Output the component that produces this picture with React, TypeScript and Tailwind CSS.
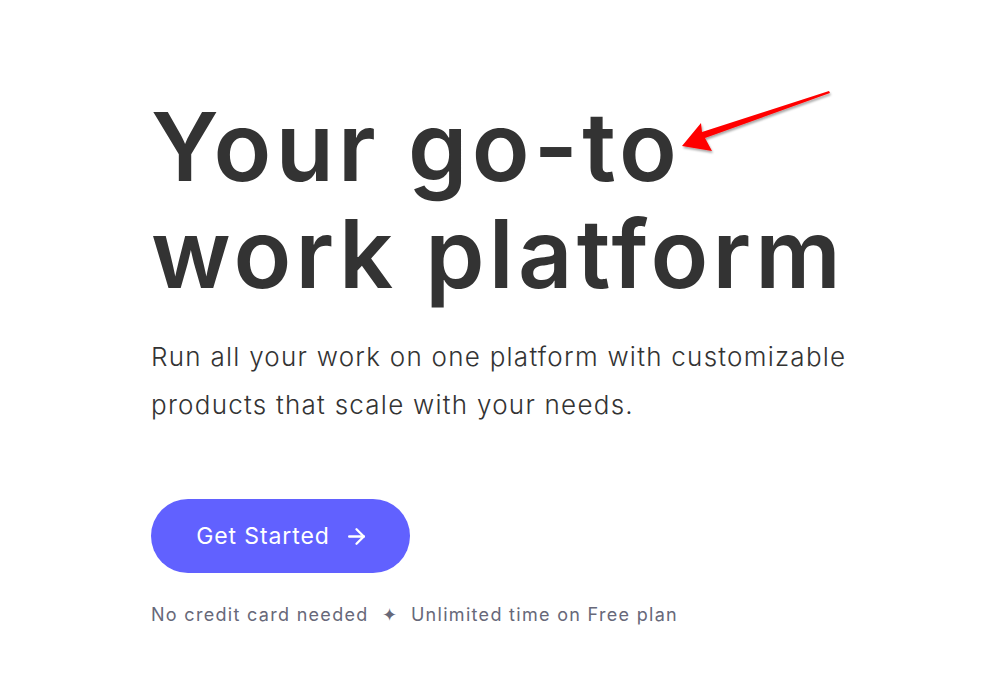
import { ArrowRight } from 'lucide-react';

export default function App() {
  return (
    <div className="relative min-h-[690px] w-full bg-white font-['Inter',sans-serif] text-[#333333]">
      <main className="pl-[151px] pt-[93px]">
        <h1 className="text-[95px] font-semibold leading-[107px] tracking-[4.2px]">
          Your go-to
          <br />
          work platform
        </h1>

        <p className="mt-[26px] text-[26px] font-light leading-[48px] tracking-[1.25px] text-[#333333]">
          Run all your work on one platform with customizable
          <br />
          products that scale with your needs.
        </p>

        <button className="mt-[70px] flex h-[74px] w-[259px] items-center justify-center gap-[14px] rounded-full bg-[#6161ff] pl-[4px] text-[23px] font-normal tracking-[0.9px] text-white">
          Get Started
          <ArrowRight size={25} strokeWidth={2.25} />
        </button>

        <div className="mt-[28px] flex items-center gap-[13px] text-[18px] tracking-[1.3px] text-[#676879]">
          <span>No credit card needed</span>
          <span className="text-[18px] leading-none">✦</span>
          <span>Unlimited time on Free plan</span>
        </div>
      </main>

      {/* annotation arrow */}
      <svg
        className="pointer-events-none absolute left-[676px] top-[86px]"
        width="160"
        height="72"
        viewBox="0 0 160 72"
      >
        <defs>
          <filter id="sh" x="-20%" y="-20%" width="140%" height="160%">
            <feDropShadow dx="1" dy="2" stdDeviation="1" floodColor="#000" floodOpacity="0.35" />
          </filter>
        </defs>
        <path
          d="M6 60 L25 37 L26 46 L153 5 L154 7 L29 52 L36 65 Z"
          fill="#ff0000"
          filter="url(#sh)"
        />
      </svg>
    </div>
  );
}
